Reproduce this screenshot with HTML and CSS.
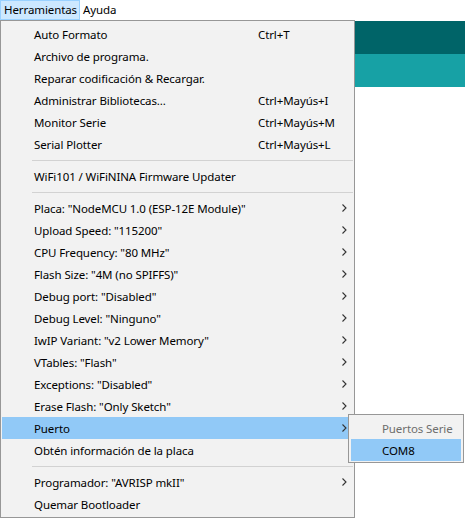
FILE: index.html
```html
<!DOCTYPE html>
<html lang="es">
<head>
<meta charset="utf-8">
<title>Herramientas</title>
<link rel="stylesheet" href="styles.css">
</head>
<body>
<div class="app">
  <div class="menubar">
    <div class="mb-item active">Herramientas</div>
    <div class="mb-item">Ayuda</div>
  </div>
  <div class="toolbar"></div>
  <div class="tabs"></div>
  <div class="editor"></div>

  <div class="dropdown">
    <div class="item"><span class="label">Auto Formato</span><span class="key">Ctrl+T</span></div>
    <div class="item"><span class="label">Archivo de programa.</span></div>
    <div class="item"><span class="label">Reparar codificación &amp; Recargar.</span></div>
    <div class="item"><span class="label">Administrar Bibliotecas...</span><span class="key">Ctrl+Mayús+I</span></div>
    <div class="item"><span class="label">Monitor Serie</span><span class="key">Ctrl+Mayús+M</span></div>
    <div class="item"><span class="label">Serial Plotter</span><span class="key">Ctrl+Mayús+L</span></div>
    <div class="sep"></div>
    <div class="item"><span class="label">WiFi101 / WiFiNINA Firmware Updater</span></div>
    <div class="sep"></div>
    <div class="item sub"><span class="label">Placa: "NodeMCU 1.0 (ESP-12E Module)"</span><svg class="arrow" width="5" height="8" viewBox="0 0 5 8"><path d="M0.5 0.5 L4 4 L0.5 7.5" fill="none" stroke="#333" stroke-width="1.1"/></svg></div>
    <div class="item sub"><span class="label">Upload Speed: "115200"</span><svg class="arrow" width="5" height="8" viewBox="0 0 5 8"><path d="M0.5 0.5 L4 4 L0.5 7.5" fill="none" stroke="#333" stroke-width="1.1"/></svg></div>
    <div class="item sub"><span class="label">CPU Frequency: "80 MHz"</span><svg class="arrow" width="5" height="8" viewBox="0 0 5 8"><path d="M0.5 0.5 L4 4 L0.5 7.5" fill="none" stroke="#333" stroke-width="1.1"/></svg></div>
    <div class="item sub"><span class="label">Flash Size: "4M (no SPIFFS)"</span><svg class="arrow" width="5" height="8" viewBox="0 0 5 8"><path d="M0.5 0.5 L4 4 L0.5 7.5" fill="none" stroke="#333" stroke-width="1.1"/></svg></div>
    <div class="item sub"><span class="label">Debug port: "Disabled"</span><svg class="arrow" width="5" height="8" viewBox="0 0 5 8"><path d="M0.5 0.5 L4 4 L0.5 7.5" fill="none" stroke="#333" stroke-width="1.1"/></svg></div>
    <div class="item sub"><span class="label">Debug Level: "Ninguno"</span><svg class="arrow" width="5" height="8" viewBox="0 0 5 8"><path d="M0.5 0.5 L4 4 L0.5 7.5" fill="none" stroke="#333" stroke-width="1.1"/></svg></div>
    <div class="item sub"><span class="label">IwIP Variant: "v2 Lower Memory"</span><svg class="arrow" width="5" height="8" viewBox="0 0 5 8"><path d="M0.5 0.5 L4 4 L0.5 7.5" fill="none" stroke="#333" stroke-width="1.1"/></svg></div>
    <div class="item sub"><span class="label">VTables: "Flash"</span><svg class="arrow" width="5" height="8" viewBox="0 0 5 8"><path d="M0.5 0.5 L4 4 L0.5 7.5" fill="none" stroke="#333" stroke-width="1.1"/></svg></div>
    <div class="item sub"><span class="label">Exceptions: "Disabled"</span><svg class="arrow" width="5" height="8" viewBox="0 0 5 8"><path d="M0.5 0.5 L4 4 L0.5 7.5" fill="none" stroke="#333" stroke-width="1.1"/></svg></div>
    <div class="item sub"><span class="label">Erase Flash: "Only Sketch"</span><svg class="arrow" width="5" height="8" viewBox="0 0 5 8"><path d="M0.5 0.5 L4 4 L0.5 7.5" fill="none" stroke="#333" stroke-width="1.1"/></svg></div>
    <div class="item sub hover"><span class="label">Puerto</span><svg class="arrow" width="5" height="8" viewBox="0 0 5 8"><path d="M0.5 0.5 L4 4 L0.5 7.5" fill="none" stroke="#333" stroke-width="1.1"/></svg>
      <div class="submenu">
        <div class="item disabled"><span class="label">Puertos Serie</span></div>
        <div class="item hover"><span class="label">COM8</span></div>
      </div>
    </div>
    <div class="item"><span class="label">Obtén información de la placa</span></div>
    <div class="sep"></div>
    <div class="item sub"><span class="label">Programador: "AVRISP mkII"</span><svg class="arrow" width="5" height="8" viewBox="0 0 5 8"><path d="M0.5 0.5 L4 4 L0.5 7.5" fill="none" stroke="#333" stroke-width="1.1"/></svg></div>
    <div class="item"><span class="label">Quemar Bootloader</span></div>
  </div>
</div>
</body>
</html>
```

FILE: styles.css
```css
* { box-sizing: border-box; }
html, body { margin: 0; padding: 0; background: #ffffff; }
body {
  font-family: "Noto Sans", "Open Sans", sans-serif;
  font-size: 11.5px;
  letter-spacing: -0.1px;
  color: #000;
  width: 465px;
  height: 518px;
  overflow: hidden;
}
.app { position: relative; width: 465px; height: 518px; overflow: hidden; }

.menubar { display: flex; height: 21px; background: #fff; }
.mb-item { height: 20px; line-height: 18px; padding: 0 2px 0 3px; border: 1px solid transparent; }
.mb-item.active { background: #cce8ff; border-color: #99d1ff; }
.mb-item + .mb-item { padding-left: 2px; }

.toolbar { height: 33px; background: #006468; }
.tabs { height: 33px; background: #17a1a5; }
.editor { background: #fff; }

.dropdown {
  position: absolute;
  left: 0;
  top: 20px;
  width: 355px;
  height: 498px;
  background: #f2f2f2;
  border: 1px solid #979797;
  padding: 2px 1px 1px 1px;
}
.item {
  position: relative;
  display: flex;
  align-items: center;
  height: 22px;
  padding-left: 32px;
  white-space: nowrap;
}
.item .label { min-width: 224px; flex: none; }
.item .key { flex: none; }
.item .arrow { position: absolute; right: 6px; top: 7px; }
.item.hover { background: #91c9f7; }

.sep { height: 10px; display: flex; align-items: center; padding-left: 30px; }
.sep::before { content: ""; display: block; height: 1px; width: 100%; background: #d2d2d2; }

.submenu {
  position: absolute;
  left: 346px;
  top: -3px;
  width: 116px;
  height: 49px;
  background: #f2f2f2;
  border: 1px solid #979797;
  padding: 2px 2px 1px 2px;
}
.submenu .item { padding-left: 31px; }
.submenu .item .label { min-width: 0; }
.submenu .item.disabled { color: #6d6d6d; }
```
